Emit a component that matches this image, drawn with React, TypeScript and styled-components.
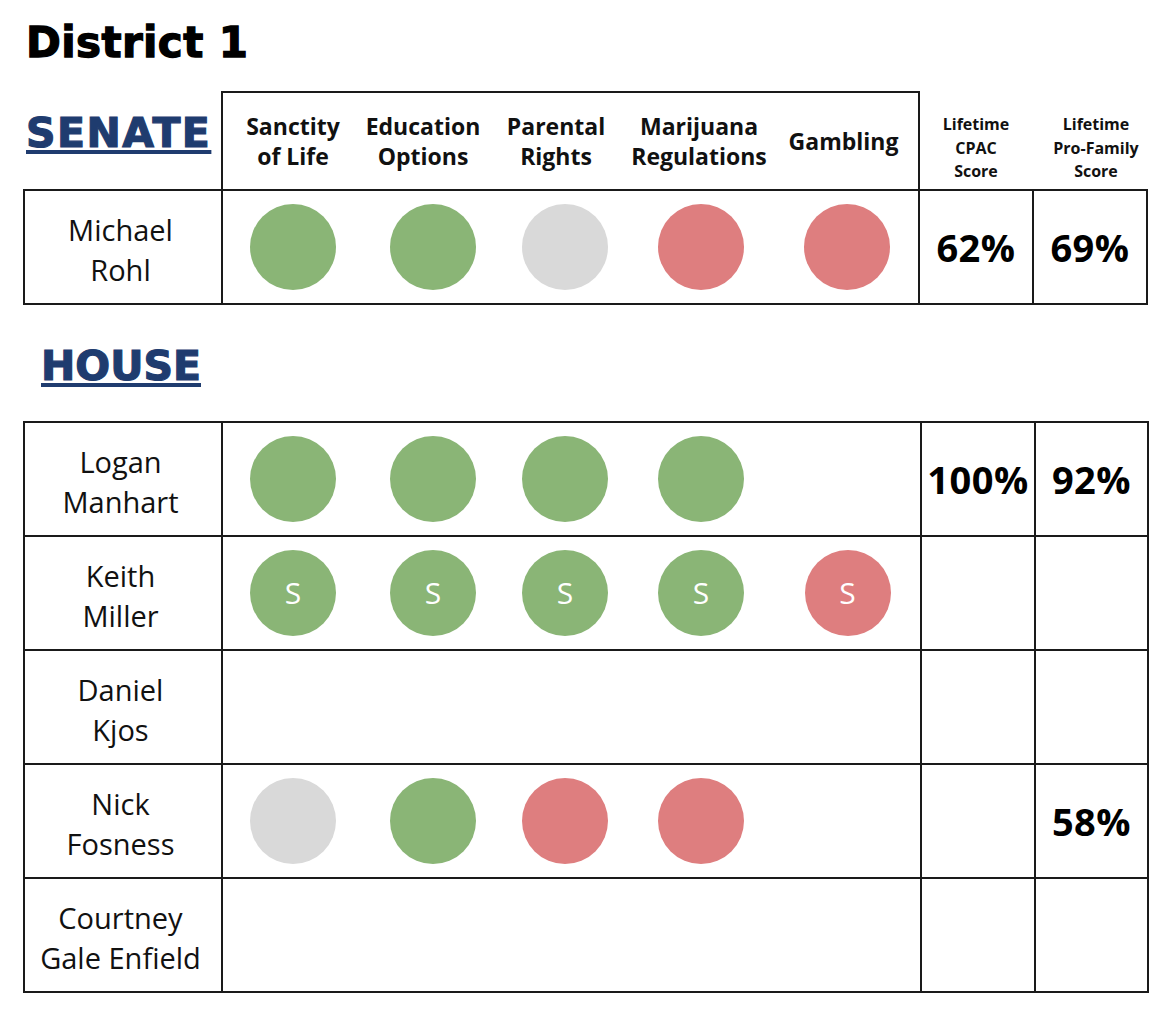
import styled, { createGlobalStyle } from "styled-components";

const GlobalStyle = createGlobalStyle`
  body {
    margin: 0;
    background: #fff;
    font-family: "Open Sans", "Liberation Sans", sans-serif;
    color: #111;
  }
`;

const Page = styled.div`
  width: 1176px;
  height: 1024px;
  box-sizing: border-box;
  padding: 18px 0 0 26px;
`;

const Title = styled.h1`
  margin: 0;
  font-family: "DejaVu Sans", sans-serif;
  font-weight: 700;
  font-size: 42px;
  line-height: 50px;
  letter-spacing: 0.4px;
  color: #000;
  -webkit-text-stroke: 1.3px #000;
`;

const Chamber = styled.h2<{ $indent?: number; $spacing?: number }>`
  margin: 0;
  padding-left: ${p => p.$indent ?? 0}px;
  font-family: "DejaVu Sans", sans-serif;
  font-weight: 700;
  font-size: 41px;
  line-height: 48px;
  letter-spacing: ${p => p.$spacing ?? 0}px;
  color: #1f3c6f;
  -webkit-text-stroke: 1.2px #1f3c6f;
  text-decoration: underline;
  text-decoration-thickness: 4px;
  text-underline-offset: 3px;
`;

const SenateGrid = styled.div`
  margin: 24px 0 0 -2px;
  display: grid;
  grid-template-columns: 198px 697px 114px 114px;
  grid-template-rows: 98px 114px;
`;

const HouseGrid = styled.div`
  margin: 32px 0 0 -2px;
  display: grid;
  grid-template-columns: 198px 699px 114px 113px;
  grid-auto-rows: 114px;
`;

const HouseHeading = styled.div`
  margin-top: 38px;
`;

const Corner = styled.div`
  padding: 17px 0 0 2px;
`;

const Cell = styled.div`
  box-shadow: inset 0 0 0 1px #1a1a1a, 0 0 0 1px #1a1a1a;
  display: flex;
  align-items: center;
  justify-content: center;
`;

const HeaderBox = styled(Cell)`
  display: grid;
  grid-template-columns: 142px 118px 148px 138px 1fr;
  align-items: center;
`;

const IssueLabel = styled.div`
  text-align: center;
  white-space: nowrap;
  font-weight: 700;
  font-size: 23px;
  line-height: 30px;
  color: #111;
`;

const ScoreLabel = styled.div<{ $shift?: number }>`
  padding: 21px 0 0 ${p => p.$shift ?? 0}px;
  text-align: center;
  font-weight: 700;
  font-size: 16px;
  line-height: 23.5px;
  color: #111;
`;

const Name = styled(Cell)`
  padding-top: 6px;
  padding-right: 5px;
  text-align: center;
  font-size: 29px;
  line-height: 40px;
  color: #111;
`;

const Dots = styled(Cell)`
  display: grid;
  grid-template-columns: 142px 138px 126px 146px 1fr;
  align-items: center;
  justify-items: center;
`;

type Tone = "yes" | "no" | "none";

const toneColor: Record<Tone, string> = {
  yes: "#8ab576",
  no: "#de7e7f",
  none: "#d9d9d9",
};

const Dot = styled.div<{ $tone: Tone }>`
  width: 86px;
  height: 86px;
  border-radius: 50%;
  background: ${p => toneColor[p.$tone]};
  display: flex;
  align-items: center;
  justify-content: center;
  color: #fff;
  font-size: 30px;
  line-height: 1;
`;

const Score = styled(Cell)`
  font-weight: 700;
  font-size: 38px;
  letter-spacing: 0.5px;
  color: #000;
`;

type Vote = { tone: Tone; sponsor?: boolean } | null;

type Member = {
  first: string;
  last: string;
  votes: Vote[];
  cpac?: string;
  family?: string;
};

const g = (sponsor?: boolean): Vote => ({ tone: "yes", sponsor });
const r = (sponsor?: boolean): Vote => ({ tone: "no", sponsor });
const n = (): Vote => ({ tone: "none" });

const issues = [
  ["Sanctity", "of Life"],
  ["Education", "Options"],
  ["Parental", "Rights"],
  ["Marijuana", "Regulations"],
  ["Gambling"],
];

const senator: Member = {
  first: "Michael",
  last: "Rohl",
  votes: [g(), g(), n(), r(), r()],
  cpac: "62%",
  family: "69%",
};

const house: Member[] = [
  { first: "Logan", last: "Manhart", votes: [g(), g(), g(), g(), null], cpac: "100%", family: "92%" },
  { first: "Keith", last: "Miller", votes: [g(true), g(true), g(true), g(true), r(true)] },
  { first: "Daniel", last: "Kjos", votes: [] },
  { first: "Nick", last: "Fosness", votes: [n(), g(), r(), r(), null], family: "58%" },
  { first: "Courtney", last: "Gale Enfield", votes: [] },
];

function Row({ member }: { member: Member }) {
  return (
    <>
      <Name>
        {member.first}
        <br />
        {member.last}
      </Name>
      <Dots>
        {[0, 1, 2, 3, 4].map(i => {
          const v = member.votes[i];
          if (!v) return <span key={i} />;
          return (
            <Dot key={i} $tone={v.tone}>
              {v.sponsor ? "S" : null}
            </Dot>
          );
        })}
      </Dots>
      <Score>{member.cpac}</Score>
      <Score>{member.family}</Score>
    </>
  );
}

export default function App() {
  return (
    <Page>
      <GlobalStyle />
      <Title>District 1</Title>

      <SenateGrid>
        <Corner>
          <Chamber $spacing={1.5}>SENATE</Chamber>
        </Corner>
        <HeaderBox>
          {issues.map(lines => (
            <IssueLabel key={lines[0]}>
              {lines.map((l, i) => (
                <div key={i}>{l}</div>
              ))}
            </IssueLabel>
          ))}
        </HeaderBox>
        <ScoreLabel>
          Lifetime
          <br />
          CPAC
          <br />
          Score
        </ScoreLabel>
        <ScoreLabel $shift={12}>
          Lifetime
          <br />
          Pro-Family
          <br />
          Score
        </ScoreLabel>
        <Row member={senator} />
      </SenateGrid>

      <HouseHeading>
        <Chamber $indent={15}>HOUSE</Chamber>
      </HouseHeading>

      <HouseGrid>
        {house.map(m => (
          <Row key={m.first} member={m} />
        ))}
      </HouseGrid>
    </Page>
  );
}
